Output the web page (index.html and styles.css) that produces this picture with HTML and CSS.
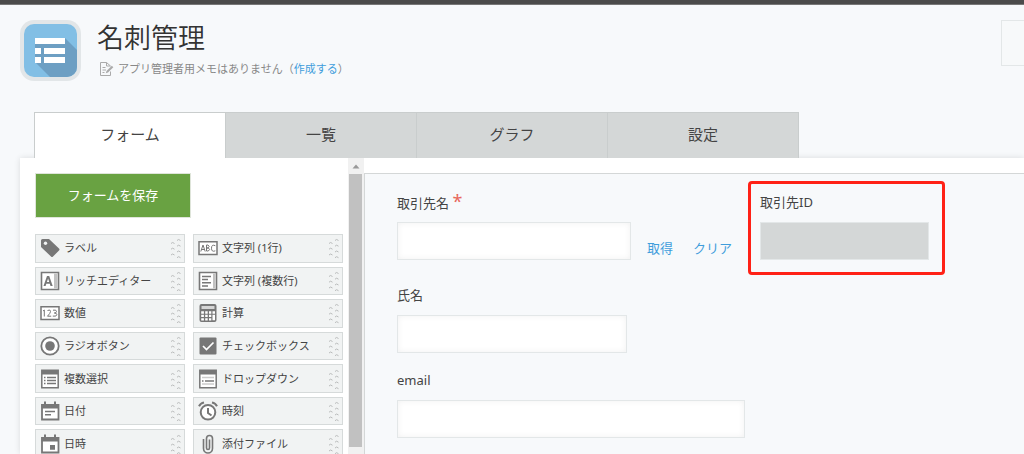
FILE: index.html
```
<!DOCTYPE html>
<html lang="ja">
<head>
<meta charset="utf-8">
<meta name="viewport" content="width=device-width, initial-scale=1">
<title>名刺管理</title>
<link rel="stylesheet" href="styles.css">
</head>
<body>
<svg class="defs" aria-hidden="true">
  <symbol id="grip" viewBox="0 0 12 22">
    <path d="M1 6.500q1.500-2 3.500 0M1 12.200q1.500-2 3.500 0M1 18q1.500-2 3.500 0M7 3.500q1.500-2 3.500 0M7 9.200q1.500-2 3.500 0M7 15q1.500-2 3.500 0M7 20.700q1.500-2 3.500 0" fill="none" stroke="#b9bbbb" stroke-width="1"/>
  </symbol>
</svg>
<div class="page">
  <div class="topbar"></div>
  <header class="header">
    <svg class="app-icon" viewBox="0 0 61 61" aria-hidden="true">
      <rect width="61" height="61" rx="14" fill="#e2e6e8"/>
      <rect x="4" y="4" width="53" height="53" rx="10" fill="#82bfe5"/>
      <path d="M45 18l12 12v17a10 10 0 0 1-10 10H30L15 42V24z" fill="#6d9fc3"/>
      <path d="M15 18h30v6H15zM15 28h6v6h-6zM24 28h21v6H24zM15 37h6v6h-6zM24 37h21v6H24z" fill="#fff"/>
    </svg>
    <div class="heading">
      <h1 class="title">名刺管理</h1>
      <p class="memo">
        <svg class="memo-icon" viewBox="0 0 14 14" aria-hidden="true"><path d="M10.500 9.500v4h-10v-13h6l4 3.500M6.500.5V4h4M2.500 5.500h3M2.500 8h3.500M2.500 10.500h2" fill="none" stroke="#aaa"/><path d="M5.800 11.200l.7-2.200L11.800 3.700l1.500 1.500L8 10.500z" fill="#aaa"/></svg>
        <span>アプリ管理者用メモはありません（<a class="link" href="#">作成する</a>）</span>
      </p>
    </div>
    <button class="header-button" type="button" aria-label="その他"></button>
  </header>

  <nav class="tabs">
    <a class="tab tab-active" href="#" aria-current="page">フォーム</a>
    <a class="tab" href="#">一覧</a>
    <a class="tab" href="#">グラフ</a>
    <a class="tab" href="#">設定</a>
  </nav>

  <main class="workspace">
    <aside class="sidebar">
      <button class="save" type="button">フォームを保存</button>
      <div class="palette">
        <button class="part" type="button"><svg class="part-icon" viewBox="0 0 20 20"><path d="M2.500 1H9l10 9.500q1 1 0 2L13 18.500q-1 1-2 0L1 9V2.500Q1 1 2.500 1z" fill="#777"/><circle cx="5.500" cy="5.200" r="1.700" fill="#f1f3f3"/></svg><span>ラベル</span><svg class="grip"><use href="#grip"/></svg></button>
        <button class="part" type="button"><svg class="part-icon" viewBox="0 0 20 20"><path d="M1.500 1.500h17v17h-17z" fill="#fff" stroke="#777" stroke-width="1.600"/><path d="M14 2.500h3.500v15H14z" fill="#c2c2c2"/><path d="M3.500 15L7 5h2.200l3.500 10h-2.200l-.7-2.200H6.300L5.600 15zM6.900 11h2.300L8.100 7.400z" fill="#777"/></svg><span>リッチエディター</span><svg class="grip"><use href="#grip"/></svg></button>
        <button class="part" type="button"><svg class="part-icon" viewBox="0 0 20 20"><path d="M1 3.800h18v12.700H1z" fill="#fff" stroke="#777" stroke-width="1.500"/><path d="M3 8l1.300-1v6.500M7.500 7.500q3-1.500 3 1 0 1.500-3 4.700h3.700M13 7.200q3.500-.8 3.500 1.300 0 1.500-2.200 1.500 2.500 0 2.500 1.600 0 2.200-4 1.500" fill="none" stroke="#777"/></svg><span>数値</span><svg class="grip"><use href="#grip"/></svg></button>
        <button class="part" type="button"><svg class="part-icon" viewBox="0 0 20 20"><circle cx="10" cy="10" r="8.700" fill="#fff" stroke="#777" stroke-width="1.800"/><circle cx="10" cy="10" r="4.800" fill="#777"/></svg><span>ラジオボタン</span><svg class="grip"><use href="#grip"/></svg></button>
        <button class="part" type="button"><svg class="part-icon" viewBox="0 0 20 20"><path d="M1.800 1.300h16.400v17.400H1.800z" fill="#fff" stroke="#777" stroke-width="1.500"/><path d="M2 1h16v4.500H2z" fill="#777"/><path d="M4 8.500h1.500M7 8.500h9M4 11.500h1.500M7 11.500h9M4 14.500h1.500M7 14.500h9" stroke="#777" stroke-width="1.300"/></svg><span>複数選択</span><svg class="grip"><use href="#grip"/></svg></button>
        <button class="part" type="button"><svg class="part-icon" viewBox="0 0 20 20"><path d="M2 4h16.500v14.500H2z" fill="#fff" stroke="#777" stroke-width="1.800"/><path d="M1.500 3h17.500v4.500H1.500zM4 .5h2V4H4zM14 .5h2V4h-2z" fill="#777"/><path d="M5 10.500h10M5 13.800h6" stroke="#777" stroke-width="1.600"/></svg><span>日付</span><svg class="grip"><use href="#grip"/></svg></button>
        <button class="part" type="button"><svg class="part-icon" viewBox="0 0 20 20"><path d="M2 4h16.500v14.500H2z" fill="#fff" stroke="#777" stroke-width="1.800"/><path d="M1.500 3h17.500v4.500H1.500zM4 .5h2V4H4zM14 .5h2V4h-2zM10 11h5v4.800h-5z" fill="#777"/></svg><span>日時</span><svg class="grip"><use href="#grip"/></svg></button>

        <button class="part" type="button"><svg class="part-icon" viewBox="0 0 20 20"><path d="M1 3.800h18v12.700H1z" fill="#fff" stroke="#777" stroke-width="1.500"/><path d="M2.800 13.500L5 7l2.200 6.500M3.500 11.500h3M8.500 7v6h1.800q2.700-1.700 0-3H8.500 10q2.400-1.700 0-3zM17.300 7.700q-3.800-1.700-3.800 2.500t3.800 2.600" fill="none" stroke="#777"/></svg><span>文字列 (1行)</span><svg class="grip"><use href="#grip"/></svg></button>
        <button class="part" type="button"><svg class="part-icon" viewBox="0 0 20 20"><path d="M1.500 1.500h17v17h-17z" fill="#fff" stroke="#777" stroke-width="1.600"/><path d="M15 2.500h2.500v15H15z" fill="#c2c2c2"/><path d="M4 5.500h9M4 8.500h6M4 11.800h9M4 15h6" stroke="#777" stroke-width="1.500"/></svg><span>文字列 (複数行)</span><svg class="grip"><use href="#grip"/></svg></button>
        <button class="part" type="button"><svg class="part-icon" viewBox="0 0 20 20"><rect x="1.500" y="1" width="17" height="18" rx="2" fill="#777"/><path d="M3.500 3h13v3h-13z" fill="#d5d5d5"/><path d="M3.200 8.200h2.700v2.500H3.200zM7.200 8.200h2.500v2.500H7.200zM11 8.200h2.300v2.500H11zM14.500 8.200h2.500v2.500h-2.500zM3.200 11.800h2.700v2.300H3.200zM7.200 11.800h2.500v2.300H7.200zM11 11.800h2.300v2.300H11zM14.500 11.800h2.500v5.500h-2.500zM3.200 15.200h2.700v2.300H3.200zM7.200 15.200h2.500v2.300H7.200zM11 15.200h2.300v2.300H11z" fill="#fff"/></svg><span>計算</span><svg class="grip"><use href="#grip"/></svg></button>
        <button class="part" type="button"><svg class="part-icon" viewBox="0 0 20 20"><rect x="1.500" y="1.500" width="17" height="17" rx="1" fill="#777"/><path d="M5 10l3.500 3.500L15.500 6.500" fill="none" stroke="#fff" stroke-width="1.700"/></svg><span>チェックボックス</span><svg class="grip"><use href="#grip"/></svg></button>
        <button class="part" type="button"><svg class="part-icon" viewBox="0 0 20 20"><path d="M1.800 1.300h16.400v17.400H1.800z" fill="#fff" stroke="#777" stroke-width="1.500"/><path d="M2 1h16v4.500H2z" fill="#777"/><path d="M4 8.500h12M4 15h12" stroke="#ccc" stroke-width="1.300"/><path d="M4 12h1.500M7 12h9" stroke="#777" stroke-width="1.500"/></svg><span>ドロップダウン</span><svg class="grip"><use href="#grip"/></svg></button>
        <button class="part" type="button"><svg class="part-icon" viewBox="0 0 20 20"><circle cx="10" cy="11.300" r="7.300" fill="#fff" stroke="#777" stroke-width="2"/><path d="M10 7v5l3.500 2.500M1 5.200q1.500-3 5-3.700M19 5.200q-1.500-3-5-3.700" fill="none" stroke="#777" stroke-width="2"/></svg><span>時刻</span><svg class="grip"><use href="#grip"/></svg></button>
        <button class="part" type="button"><svg class="part-icon" viewBox="0 0 20 20"><path d="M5.500 5v9.500a4.500 4.500 0 0 0 9 0V4.500a3 3 0 0 0-6 0v9.500a1.500 1.500 0 0 0 3 0V5.500" fill="none" stroke="#777" stroke-width="1.600"/></svg><span>添付ファイル</span><svg class="grip"><use href="#grip"/></svg></button>
      </div>
    </aside>
    <div class="scrollbar" aria-hidden="true">
      <svg class="scroll-arrow" viewBox="0 0 16 16"><path d="M4.500 10.500L8 6.500l3.500 4z" fill="#999"/></svg>
      <div class="scroll-thumb"></div>
    </div>
    <form class="canvas">
      <div class="row row-first">
        <div class="field">
          <label class="label" for="client">取引先名 <span class="required">*</span></label>
          <input class="input input-client" id="client" type="text">
        </div>
        <div class="lookup">
          <a class="link" href="#">取得</a>
          <a class="link" href="#">クリア</a>
        </div>
        <div class="field highlighted">
          <label class="label" for="client-id">取引先ID</label>
          <input class="input input-id" id="client-id" type="text" disabled>
        </div>
      </div>
      <div class="row">
        <div class="field">
          <label class="label" for="name">氏名</label>
          <input class="input input-name" id="name" type="text">
        </div>
      </div>
      <div class="row">
        <div class="field">
          <label class="label" for="email">email</label>
          <input class="input input-email" id="email" type="email">
        </div>
      </div>
    </form>
  </main>
</div>
</body>
</html>
```
FILE: styles.css
```
* {
  box-sizing: border-box;
}

body {
  margin: 0;
  color: #444;
  background: #f7f9fb;
  font-family: "Noto Sans", "Noto Sans CJK JP", sans-serif;
  font-size: 13px;
  line-height: 18px;
}

button,
input {
  font: inherit;
  color: inherit;
}

.defs {
  display: none;
}

.page {
  display: flex;
  flex-direction: column;
  height: 100vh;
  overflow: hidden;
}

.topbar {
  flex: none;
  height: 5px;
  background: #4b4b4b;
  border-bottom: 1px solid #777;
}

.header {
  display: flex;
  flex: none;
  align-items: flex-start;
  gap: 16px;
  height: 107px;
  padding: 15px 0 0 20px;
}

.app-icon {
  flex: none;
  width: 61px;
  height: 61px;
}

.heading {
  flex: 1;
}

.title {
  margin: 0;
  color: #333;
  font-size: 27px;
  font-weight: 350;
  line-height: 36px;
}

.memo {
  display: flex;
  align-items: center;
  gap: 4px;
  margin: 4px 0 0 3px;
  color: #888;
  font-size: 11px;
}

.memo-icon {
  width: 14px;
  height: 14px;
}

.link {
  color: #3f9ddb;
  text-decoration: none;
}

.header-button {
  width: 23px;
  height: 46px;
  padding: 0;
  background: #f7f9fa;
  border: 1px solid #e3e7e8;
  border-right: 0;
}

.tabs {
  display: flex;
  flex: none;
  width: 765px;
  max-width: 100%;
  margin-left: 34px;
  position: relative;
  z-index: 1;
}

.tab {
  flex: 1;
  height: 46px;
  color: #444;
  background: #d4d7d7;
  border: solid #c9cdcd;
  border-width: 1px 1px 0 0;
  font-size: 15px;
  line-height: 43px;
  text-align: center;
  text-decoration: none;
}

.tab-active {
  background: #fff;
  border-left-width: 1px;
}

.workspace {
  display: flex;
  flex: 1;
  min-height: 0;
  margin-left: 20px;
  background: #fff;
  box-shadow: 0 0 6px rgba(0, 0, 0, 0.12);
}

.sidebar {
  flex: none;
  width: 328px;
  padding: 15px 5px 0 15px;
  overflow: hidden;
}

.save {
  display: block;
  width: 156px;
  height: 45px;
  padding: 0 0 2px;
  color: #fff;
  background: #69a242;
  border: 1px solid #dfe5da;
}

.palette {
  display: grid;
  grid-auto-flow: column;
  grid-template-rows: repeat(7, 1fr);
  grid-template-columns: 1fr 1fr;
  gap: 4px 8px;
  height: 224px;
  margin-top: 16px;
}

.part {
  display: flex;
  align-items: center;
  gap: 4px;
  min-height: 0;
  padding: 0 2px 0 4px;
  background: #f1f3f3;
  border: 1px solid #d6dada;
  font-size: 11px;
  text-align: left;
  white-space: nowrap;
}

.part span {
  flex: 1;
}

.part-icon {
  flex: none;
  width: 20px;
  height: 20px;
}

.grip {
  flex: none;
  width: 12px;
  height: 22px;
}

.scrollbar {
  flex: none;
  width: 16px;
  background: #f1f1f1;
}

.scroll-arrow {
  display: block;
  width: 16px;
  height: 16px;
}

.scroll-thumb {
  height: 273px;
  margin: 0 2px 0 1px;
  background: #c1c1c1;
}

.canvas {
  flex: 1;
  margin-top: 15px;
  padding: 19px 0 0 32px;
  background: #f7f9fb;
  border: solid #d4d7d7;
  border-width: 1px 0 0 1px;
}

.row {
  display: flex;
  margin-bottom: 18px;
}

.row-first {
  margin-bottom: 26px;
}

.field {
  display: flex;
  flex-direction: column;
  gap: 11px;
}

.label {
  height: 18px;
  white-space: nowrap;
}

.required {
  color: #e8675c;
  font-size: 18px;
  line-height: 16px;
}

.input {
  height: 38px;
  padding: 0 8px;
  background: #fff;
  border: 1px solid #e3e7e8;
  box-shadow: inset 0 0 6px rgba(0, 0, 0, 0.06);
}

.input-client {
  width: 234px;
}

.input-id {
  width: 169px;
}

.input-name {
  width: 230px;
}

.input-email {
  width: 348px;
}

.input:disabled {
  background: #d4d7d7;
  box-shadow: none;
}

.lookup {
  display: flex;
  align-items: flex-end;
  gap: 20px;
  margin: 0 28px 3px 16px;
}

.highlighted {
  position: relative;
}

.highlighted::after {
  content: "";
  position: absolute;
  inset: -12px -16px -15px -12px;
  border: 3px solid #ff2116;
  border-radius: 4px;
  pointer-events: none;
}
```
